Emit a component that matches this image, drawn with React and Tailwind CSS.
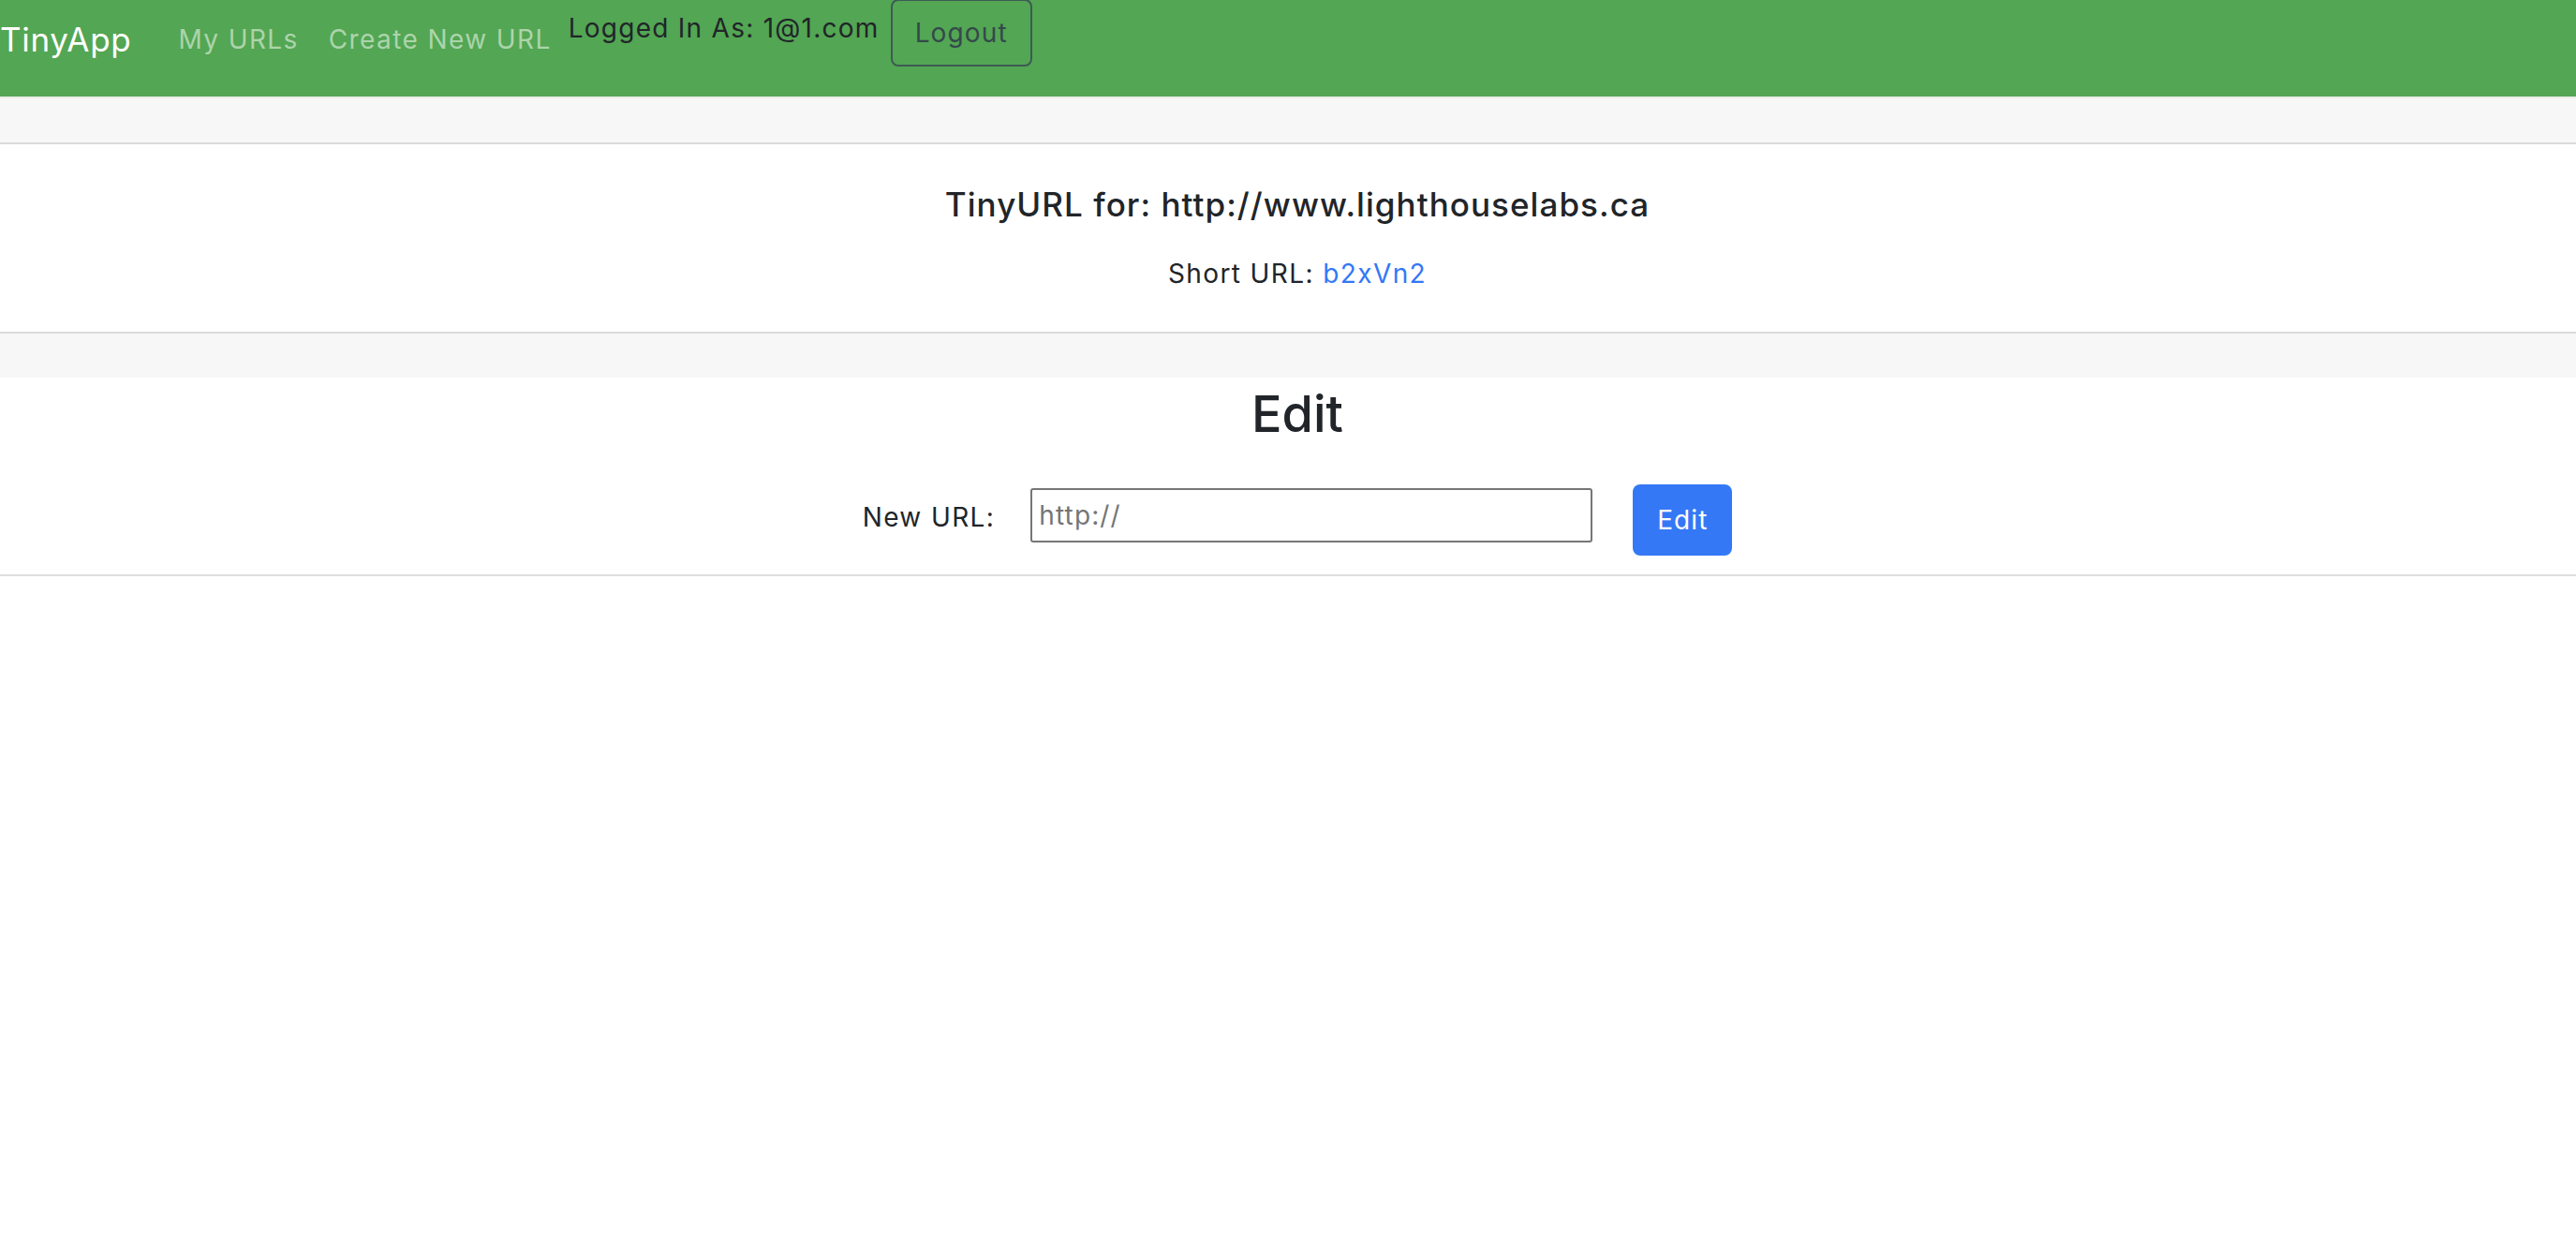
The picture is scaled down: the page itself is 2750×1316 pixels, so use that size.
export default function App() {
  return (
    <div className="min-h-screen bg-white text-[#212529] font-['Inter',sans-serif]">
      {/* ── NAVBAR ── */}
      <nav className="h-[103px] bg-[#53a653] flex items-start">
        <a href="#" className="mt-[16px] text-[35px] leading-[52px] tracking-[0.02em] text-white">
          TinyApp
        </a>
        <a href="#" className="ml-[50px] mt-[21px] text-[28px] leading-[42px] tracking-[0.05em] text-[#acd4ac]">
          My URLs
        </a>
        <a href="#" className="ml-[32px] mt-[21px] text-[28px] leading-[42px] tracking-[0.05em] text-[#acd4ac]">
          Create New URL
        </a>
        <span className="ml-[18px] mt-[9px] text-[28px] leading-[42px] tracking-[0.045em] text-[#212529]">
          Logged In As: 1@1.com
        </span>
        <button className="ml-[12px] -mt-[1px] h-[72px] w-[151px] rounded-[8px] border-2 border-[#3e5a55] text-[28px] tracking-[0.04em] text-[#34494c]">
          Logout
        </button>
      </nav>

      {/* ── URL CARD ── */}
      <div className="border-t-2 border-[#e8ece8]">
        <div className="h-[49px] bg-[#f7f7f7] border-b-2 border-[#dadada]" />
        <div className="pl-[20px] pt-[43px] pb-[41px] text-center">
          <h5 className="text-[35px] font-medium leading-[42px] tracking-[0.03em]">
            TinyURL for: http://www.lighthouselabs.ca
          </h5>
          <p className="mt-[32px] text-[28px] leading-[42px] tracking-[0.05em]">
            Short URL: <a href="#" className="text-[#3478f6]">b2xVn2</a>
          </p>
        </div>
        <div className="h-[49px] bg-[#f7f7f7] border-t-2 border-[#dadada]" />
      </div>

      {/* ── EDIT FORM ── */}
      <div className="pl-[20px] pb-[20px] border-b-2 border-[#dedede] text-center">
        <h2 className="mt-[5px] text-[54px] font-medium leading-[67px]">Edit</h2>
        <form className="mt-[39px] flex items-start justify-center">
          <label className="mt-[17px] text-[28px] leading-[42px] tracking-[0.05em]">New URL:</label>
          <input
            type="text"
            placeholder="http://"
            className="ml-[38px] mt-[7px] h-[58px] w-[600px] rounded-[3px] border-2 border-[#767676] px-[7px] text-[28px] tracking-[0.04em] placeholder:text-[#757575] outline-none"
          />
          <button
            type="button"
            className="ml-[43px] mt-[3px] h-[76px] w-[106px] rounded-[8px] bg-[#3478f6] text-[28px] tracking-[0.04em] text-white"
          >
            Edit
          </button>
        </form>
      </div>
    </div>
  );
}
